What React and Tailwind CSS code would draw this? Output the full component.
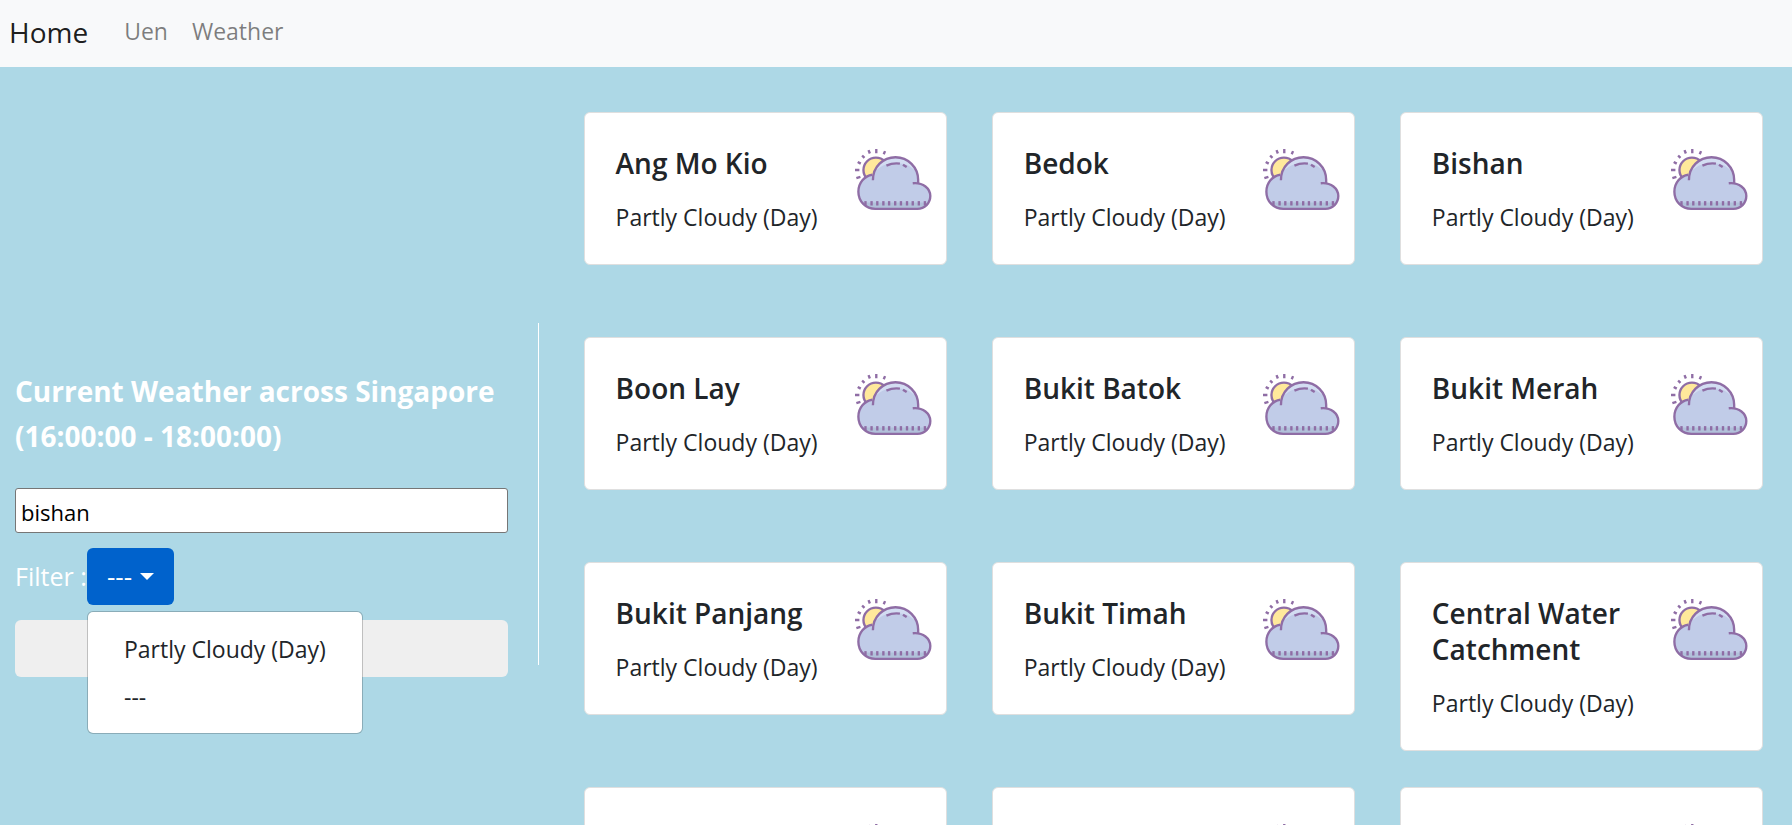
import { useState } from 'react';

const FORECAST = 'Partly Cloudy (Day)';

const AREAS = [
  'Ang Mo Kio',
  'Bedok',
  'Bishan',
  'Boon Lay',
  'Bukit Batok',
  'Bukit Merah',
  'Bukit Panjang',
  'Bukit Timah',
  'Central Water Catchment',
  'Changi',
  'Choa Chu Kang',
  'Clementi',
];

const TICKS = [79, 97, 114, 132, 149, 167, 184, 202, 219, 237, 255];

function PartlyCloudyIcon() {
  return (
    <svg viewBox="45 36 231 189" className="h-16 w-[78px] shrink-0" fill="none" aria-hidden="true">
      <circle cx="110" cy="104" r="37" fill="#ffe99b" stroke="#8f6da5" strokeWidth="7" />
      <path
        d="M108 219 C80 219 58 197 58 168 C58 142 76 121 101 117 C108 88 136 66 168 66 C205 66 235 96 235 133 L235 144 C256 145 271 162 271 181 C271 202 254 219 233 219 Z"
        fill="#c1cce8"
      />
      <path d="M66 200 H268 C262 212 249 219 233 219 H108 C90 219 74 212 66 200 Z" fill="#b1c1da" />
      <path
        d="M104 112 C112 86 136 68 168 68 C200 68 224 86 232 112 C216 94 198 83 168 83 C140 83 120 94 104 112 Z"
        fill="#d3ddf2"
      />
      <g stroke="#8f6da5" strokeWidth="7" strokeLinejoin="round">
        <path d="M101 134 C101 94 131 66 168 66 C205 66 235 96 235 133 V142" />
        <path d="M219 143 C250 140 271 159 271 181 C271 202 254 219 233 219 H108 C80 219 58 197 58 168 C58 142 76 121 99 118" />
        <path d="M141 91 Q160 82 181 85" />
        <path d="M190 88 L201 95" />
      </g>
      <g stroke="#8f6da5" strokeWidth="7">
        <path d="M111 42 V54 M88 45 L92 55 M137 48 L133 57 M69 61 L76 68 M56 80 L65 85 M48 104 H61 M52 128 L64 124" />
        {TICKS.map((x) => (
          <path key={x} d={`M${x} 196 V209`} />
        ))}
      </g>
    </svg>
  );
}

function WeatherCard({ area }) {
  return (
    <article className="flex items-start justify-between rounded-md border border-[#dfdfdf] bg-white pt-8 pr-3.5 pb-[29px] pl-[31px]">
      <div className="text-[#212529]">
        <h2 className="text-[28px] leading-9 font-semibold">{area}</h2>
        <p className="mt-[18px] text-[23px] leading-9">{FORECAST}</p>
      </div>
      <div className="pt-0.5">
        <PartlyCloudyIcon />
      </div>
    </article>
  );
}

function Navbar() {
  return (
    <nav className="flex h-[67px] shrink-0 items-center bg-[#f8f9fa] px-[9px] pb-1">
      <a href="#home" className="text-[28px] text-black/90">Home</a>
      <a href="#uen" className="ml-9 text-[23px] text-black/50">Uen</a>
      <a href="#weather" className="ml-6 text-[23px] text-black/50">Weather</a>
    </nav>
  );
}

function FilterDropdown({ value, onChange }) {
  const [open, setOpen] = useState(true);
  const choose = (option) => {
    onChange(option);
    setOpen(false);
  };
  return (
    <div className="relative">
      <button
        type="button"
        aria-haspopup="menu"
        aria-expanded={open}
        aria-labelledby="filter-label"
        onClick={() => setOpen(!open)}
        className="flex h-[57px] items-center gap-2 rounded-md bg-[#0062cc] px-5 text-[26px] text-white"
      >
        <span>{value}</span>
        <span className="border-x-[7px] border-t-[7px] border-x-transparent border-t-white" />
      </button>
      {open && (
        <div
          role="menu"
          className="absolute top-full left-0 z-10 mt-1.5 flex w-[276px] flex-col rounded-md border border-black/20 bg-white bg-clip-padding pt-[13px] pb-3 text-[23px] text-[#212529]"
        >
          {[FORECAST, '---'].map((option) => (
            <button key={option} type="button" role="menuitem" onClick={() => choose(option)} className="h-12 px-9 text-left whitespace-nowrap">
              {option}
            </button>
          ))}
        </div>
      )}
    </div>
  );
}

function Sidebar() {
  const [search, setSearch] = useState('bishan');
  const [filter, setFilter] = useState('---');
  return (
    <aside className="w-[30%] shrink-0 pt-64">
      <div className="-mr-px h-[342px] border-r border-white pt-[46px] pr-[30px] pl-[15px]">
        <h1 className="text-[28px] leading-[45px] font-bold whitespace-nowrap text-white">
          Current Weather across Singapore
          <br />
          (16:00:00 - 18:00:00)
        </h1>
        <div className="mt-[29px] flex flex-col gap-[15px]">
          <input
            type="text"
            aria-label="Search area"
            value={search}
            onChange={(e) => setSearch(e.target.value)}
            className="h-[45px] w-full rounded-[3px] border border-[#767676] bg-white px-[5px] pt-0.5 text-[22px] text-black"
          />
          <div className="flex items-center">
            <span id="filter-label" className="w-[72px] text-[25px] whitespace-nowrap text-white">Filter :</span>
            <FilterDropdown value={filter} onChange={setFilter} />
          </div>
          <button type="button" aria-label="Submit" className="h-[57px] w-full rounded-md bg-[#efefef]" />
        </div>
      </div>
    </aside>
  );
}

export default function App() {
  return (
    <div className="flex h-screen flex-col overflow-hidden bg-[#add8e6] font-['Open_Sans','Noto_Sans',sans-serif]">
      <Navbar />
      <div className="flex min-h-0 flex-1">
        <Sidebar />
        <main className="grid flex-1 auto-rows-[225px] grid-cols-3 items-start gap-x-[45px] pt-[45px] pr-[29px] pl-[46px]">
          {AREAS.map((area) => (
            <WeatherCard key={area} area={area} />
          ))}
        </main>
      </div>
    </div>
  );
}
